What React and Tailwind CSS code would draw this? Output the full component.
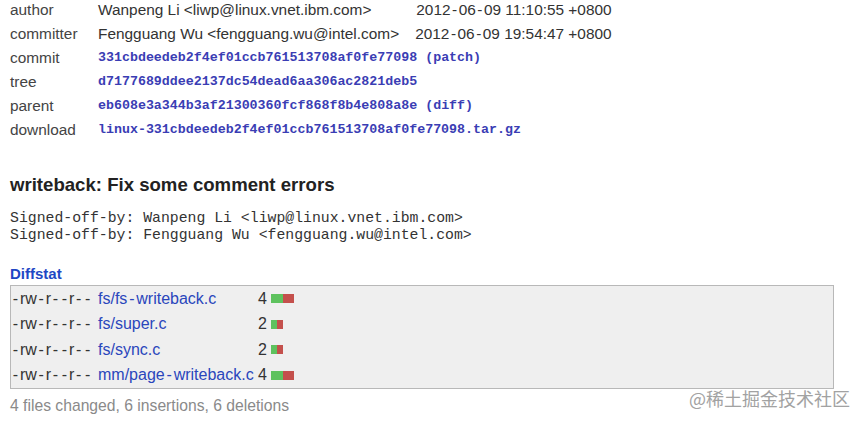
const sans = { fontFamily: '"Liberation Sans", Arial, sans-serif' };

// the original renders hyphens as wide dashes; give them a little room
function Dashed({ text, gap }) {
  const parts = text.split('-');
  return parts.map((p, i) => (
    <span key={i}>
      {p}
      {i < parts.length - 1 && <span className={gap}>-</span>}
    </span>
  ));
}

const info = [
  { label: 'author', value: 'Wanpeng Li <liwp@linux.vnet.ibm.com>', date: '2012-06-09 11:10:55 +0800' },
  { label: 'committer', value: 'Fengguang Wu <fengguang.wu@intel.com>', date: '2012-06-09 19:54:47 +0800' },
];

const hashes = [
  { label: 'commit', value: '331cbdeedeb2f4ef01ccb761513708af0fe77098', extra: 'patch' },
  { label: 'tree', value: 'd7177689ddee2137dc54dead6aa306ac2821deb5' },
  { label: 'parent', value: 'eb608e3a344b3af21300360fcf868f8b4e808a8e', extra: 'diff' },
  { label: 'download', value: 'linux-331cbdeedeb2f4ef01ccb761513708af0fe77098.tar.gz' },
];

const files = [
  { name: 'fs/fs-writeback.c', count: 4, add: 12, del: 11 },
  { name: 'fs/super.c', count: 2, add: 6, del: 6 },
  { name: 'fs/sync.c', count: 2, add: 6, del: 6 },
  { name: 'mm/page-writeback.c', count: 4, add: 12, del: 11 },
];

function App() {
  return (
    <div className="relative w-[864px] h-[422px] overflow-hidden bg-white text-[#333]" style={sans}>
      <div className="grid grid-cols-[88px_auto_auto] w-fit pl-[10px] -mt-[2px] text-[15.4px] leading-[24px]">
        {info.map(r => (
          <div key={r.label} className="contents">
            <div className="text-[#444]">{r.label}</div>
            <div>{r.value}</div>
            <div className="text-right pl-[16px]">
              <Dashed text={r.date} gap="mx-[1.5px]" />
            </div>
          </div>
        ))}
        {hashes.map(r => (
          <div key={r.label} className="contents">
            <div className="text-[#444]">{r.label}</div>
            <div className="col-span-2 font-['Liberation_Mono',monospace] font-bold text-[13.3px] text-[#3a3db4]">
              {r.value}
              {r.extra && <span> ({r.extra})</span>}
            </div>
          </div>
        ))}
      </div>

      <h2 className="mt-[31px] pl-[10px] text-[18.6px] font-bold leading-[24px] text-[#222]">
        writeback: Fix some comment errors
      </h2>

      <pre className="mt-[13px] pl-[10px] font-['Liberation_Mono',monospace] text-[14.8px] leading-[17px] text-[#333]">
{`Signed-off-by: Wanpeng Li <liwp@linux.vnet.ibm.com>
Signed-off-by: Fengguang Wu <fengguang.wu@intel.com>`}
      </pre>

      <div className="mt-[21px] pl-[10px] text-[15px] font-bold leading-[18px] text-[#1e47c4]">Diffstat</div>

      <div className="ml-[10px] mt-[2px] w-[824px] border border-[#b8b8b8] bg-[#efefef] text-[16px]">
        {files.map(f => (
          <div key={f.name} className="grid grid-cols-[87px_160px_13px_auto] h-[25.5px] items-center">
            <div className="text-[#333]">
              <Dashed text="-rw-r--r--" gap="mx-[1.8px]" />
            </div>
            <div className="text-[#2a46bc]">
              <Dashed text={f.name} gap="mx-[1.8px]" />
            </div>
            <div className="text-[#333]">{f.count}</div>
            <div className="flex h-[9px]">
              <div className="h-full bg-[#5ec25e]" style={{ width: f.add }} />
              <div className="h-full bg-[#c4504c]" style={{ width: f.del }} />
            </div>
          </div>
        ))}
      </div>

      <div className="mt-[8px] pl-[10px] text-[15.7px] leading-[18px] text-[#8a8a8a]">
        4 files changed, 6 insertions, 6 deletions
      </div>

      <div
        className="absolute left-[689px] top-[386px] text-[18px] leading-[24px] text-[#a2a2a2]"
        style={{ fontFamily: '"Noto Sans CJK SC", "Liberation Sans", sans-serif' }}
      >
        @稀土掘金技术社区
      </div>
    </div>
  );
}

export default App;
